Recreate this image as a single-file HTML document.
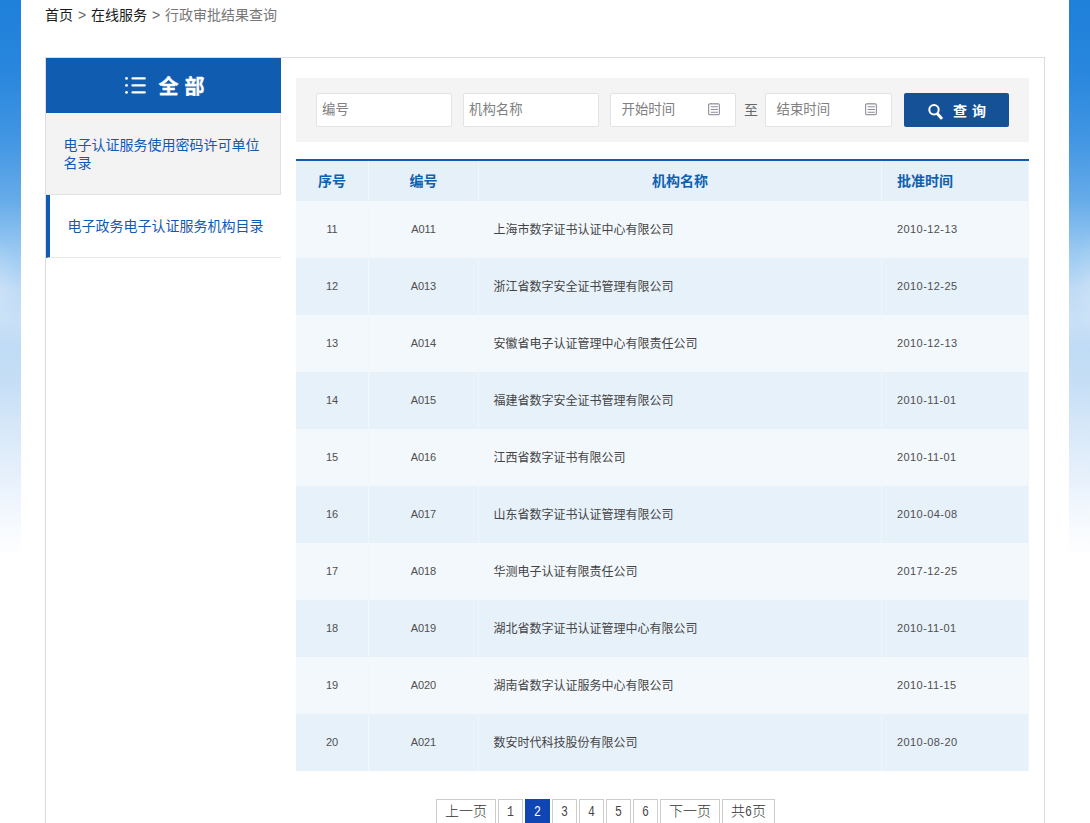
<!DOCTYPE html>
<html lang="zh-CN">
<head>
<meta charset="utf-8">
<title>行政审批结果查询</title>
<style>
*{margin:0;padding:0;box-sizing:border-box;}
html,body{width:1090px;height:823px;overflow:hidden;background:#fff;}
body{position:relative;font-family:"Liberation Sans","Noto Sans CJK SC",sans-serif;font-size:14px;color:#333;}
.sky{position:absolute;top:0;width:21px;height:823px;background:linear-gradient(to bottom,#1f80da 0px,#2886dd 70px,#4296e3 140px,#66abe9 200px,#98c8f1 250px,#c0dbf5 290px,#c8e0f7 320px,#c0dbf5 350px,#c6dff6 385px,#d4e6f8 420px,#e9f2fc 484px,#f5f9fe 520px,#fcfdff 545px,#ffffff 558px);}
.sky.l{left:0;}
.sky.l:after{content:"";position:absolute;left:0;top:230px;width:21px;height:110px;background:radial-gradient(ellipse 18px 50px at 0 55px,rgba(255,255,255,.16),rgba(255,255,255,0));}
.sky.r:after{content:"";position:absolute;left:0;top:215px;width:21px;height:120px;background:radial-gradient(ellipse 16px 55px at 21px 70px,rgba(255,255,255,.15),rgba(255,255,255,0));}
.sky.r{left:1069px;}
.crumb{position:absolute;left:45px;top:4px;height:22px;line-height:22px;font-size:14px;color:#777;white-space:nowrap;}
.crumb b{font-weight:normal;color:#1a1a1a;}
.crumb i{font-style:normal;color:#666;display:inline-block;width:18px;text-align:center;}
.box{position:absolute;left:45px;top:57px;width:1000px;height:800px;border:1px solid #dcdcdc;background:#fff;}
.side{position:absolute;left:0;top:0;width:235px;}
.side h3{height:55px;background:#105cb0;color:#fff;font-size:20px;font-weight:bold;line-height:55px;position:relative;}
.side h3 span{position:absolute;left:112.5px;top:2px;letter-spacing:6px;white-space:nowrap;-webkit-text-stroke:0.35px #fff;}
.side h3 svg{position:absolute;left:78px;top:17px;}
.side .it1{height:82px;background:#f3f3f3;border-right:1px solid #e2e2e2;border-bottom:1px solid #e2e2e2;color:#0f5ab3;font-size:14px;line-height:18px;padding:22.5px 17px 0 17.4px;}
.side .it2{height:63px;border-left:4px solid #105cb0;border-bottom:1px solid #e6e6e6;color:#0f5ab3;font-size:14px;line-height:62px;padding-left:17.4px;white-space:nowrap;}
.search{position:absolute;left:250px;top:20px;width:733px;height:64px;background:#f4f4f4;}
.inp{position:absolute;top:15px;height:34px;width:136px;background:#fff;border:1px solid #e3e3e3;border-radius:2px;font-size:13.4px;color:#808080;line-height:32px;padding-left:5px;}
.cal{position:absolute;top:9px;left:97px;}
.btn{position:absolute;left:608px;top:15px;width:105px;height:34px;background:#155196;border-radius:2px;color:#fff;font-size:14px;font-weight:bold;line-height:34px;}
table{position:absolute;left:250px;top:101px;width:733px;border-collapse:separate;border-spacing:0;border-top:2px solid #105cb0;table-layout:fixed;}
th{height:40px;padding-bottom:2px;background:#e6f0f9;color:#0e61af;font-size:14px;font-weight:bold;text-align:center;border-right:1px solid #f1f6fb;}
td{height:57px;padding-bottom:2px;font-size:12px;color:#555;text-align:center;border-right:1px solid #f1f6fb;}
tr.a td{background:#f3f8fc;}
tr.b td{background:#e7f1fa;}
td.n{text-align:left;padding-left:14.5px;color:#444;}
td.d{text-align:left;padding-left:15px;}
th.d{text-align:left;padding-left:15px;}
.num span{display:inline-block;font-family:"Liberation Sans","Noto Sans CJK SC",sans-serif;font-size:11px;color:#4f4f4f;letter-spacing:-0.1px;position:relative;top:0.5px;}
.num.d span{letter-spacing:0.42px;}
.pg span{position:absolute;top:741px;height:26px;line-height:23px;border:1px solid #ccc;font-size:14px;font-weight:300;color:#333;text-align:center;white-space:nowrap;}
.pg span.c{background:#1046b4;border-color:#1046b4;color:#fff;}
.pg span.c em{color:#fff;}
.pg em{display:inline-block;font-style:normal;font-weight:400;font-family:"Liberation Mono",monospace;font-size:11.5px;transform:translateY(-1px) scaleY(1.32);color:#444;}
</style>
</head>
<body>
<div class="sky l"></div>
<div class="sky r"></div>
<div class="crumb"><b>首页</b><i>&gt;</i><b>在线服务</b><i>&gt;</i>行政审批结果查询</div>
<div class="box">
  <div class="side">
    <h3><svg width="24" height="21" viewBox="0 0 24 21"><g fill="#fff"><circle cx="2.5" cy="3.4" r="1.4"/><circle cx="2.5" cy="10.4" r="1.4"/><circle cx="2.5" cy="17.4" r="1.4"/></g><g stroke="#fff" stroke-width="2.2" stroke-linecap="round"><line x1="8.5" y1="3.4" x2="20.8" y2="3.4"/><line x1="8.5" y1="10.4" x2="20.8" y2="10.4"/><line x1="8.5" y1="17.4" x2="20.8" y2="17.4"/></g></svg><span>全部</span></h3>
    <div class="it1">电子认证服务使用密码许可单位名录</div>
    <div class="it2">电子政务电子认证服务机构目录</div>
  </div>
  <div class="search">
    <div class="inp" style="left:20px">编号</div>
    <div class="inp" style="left:167px">机构名称</div>
    <div class="inp" style="left:314px;width:126px;padding-left:10.5px">开始时间<svg class="cal" width="13" height="13" viewBox="0 0 13 13"><g fill="none" stroke="#9696a6"><rect x="0.6" y="0.9" width="10.8" height="10.7" rx="1.1" stroke-width="1.2"/><path d="M2.7 3.7H9.9M2.7 6.5H9.9M2.7 9.3H9.9" stroke="#8a8a9a" stroke-width="1.1"/><path d="M3.2 0V1M6 0V1M8.8 0V1" stroke-width="1.3"/></g></svg></div>
    <div style="position:absolute;left:448px;top:15px;line-height:34px;font-size:14px;color:#666">至</div>
    <div class="inp" style="left:469px;width:127px;padding-left:10.5px">结束时间<svg class="cal" style="left:99px" width="13" height="13" viewBox="0 0 13 13"><g fill="none" stroke="#9696a6"><rect x="0.6" y="0.9" width="10.8" height="10.7" rx="1.1" stroke-width="1.2"/><path d="M2.7 3.7H9.9M2.7 6.5H9.9M2.7 9.3H9.9" stroke="#8a8a9a" stroke-width="1.1"/><path d="M3.2 0V1M6 0V1M8.8 0V1" stroke-width="1.3"/></g></svg></div>
    <div class="btn"><svg width="18" height="18" viewBox="0 0 18 18" style="position:absolute;left:22px;top:9px"><circle cx="8" cy="7.7" r="4.7" fill="none" stroke="#fff" stroke-width="2"/><line x1="11.6" y1="12.0" x2="15.2" y2="16.0" stroke="#fff" stroke-width="3" stroke-linecap="round"/></svg><span style="position:absolute;left:49px;top:1px;letter-spacing:5px;white-space:nowrap">查询</span></div>
  </div>
  <table>
    <colgroup><col style="width:73px"><col style="width:110px"><col style="width:403px"><col style="width:147px"></colgroup>
    <tr><th>序号</th><th>编号</th><th>机构名称</th><th class="d">批准时间</th></tr>
    <tr class="a"><td class="num"><span>11</span></td><td class="num"><span>A011</span></td><td class="n">上海市数字证书认证中心有限公司</td><td class="d num"><span>2010-12-13</span></td></tr>
    <tr class="b"><td class="num"><span>12</span></td><td class="num"><span>A013</span></td><td class="n">浙江省数字安全证书管理有限公司</td><td class="d num"><span>2010-12-25</span></td></tr>
    <tr class="a"><td class="num"><span>13</span></td><td class="num"><span>A014</span></td><td class="n">安徽省电子认证管理中心有限责任公司</td><td class="d num"><span>2010-12-13</span></td></tr>
    <tr class="b"><td class="num"><span>14</span></td><td class="num"><span>A015</span></td><td class="n">福建省数字安全证书管理有限公司</td><td class="d num"><span>2010-11-01</span></td></tr>
    <tr class="a"><td class="num"><span>15</span></td><td class="num"><span>A016</span></td><td class="n">江西省数字证书有限公司</td><td class="d num"><span>2010-11-01</span></td></tr>
    <tr class="b"><td class="num"><span>16</span></td><td class="num"><span>A017</span></td><td class="n">山东省数字证书认证管理有限公司</td><td class="d num"><span>2010-04-08</span></td></tr>
    <tr class="a"><td class="num"><span>17</span></td><td class="num"><span>A018</span></td><td class="n">华测电子认证有限责任公司</td><td class="d num"><span>2017-12-25</span></td></tr>
    <tr class="b"><td class="num"><span>18</span></td><td class="num"><span>A019</span></td><td class="n">湖北省数字证书认证管理中心有限公司</td><td class="d num"><span>2010-11-01</span></td></tr>
    <tr class="a"><td class="num"><span>19</span></td><td class="num"><span>A020</span></td><td class="n">湖南省数字认证服务中心有限公司</td><td class="d num"><span>2010-11-15</span></td></tr>
    <tr class="b"><td class="num"><span>20</span></td><td class="num"><span>A021</span></td><td class="n">数安时代科技股份有限公司</td><td class="d num"><span>2010-08-20</span></td></tr>
  </table>
  <div class="pg"><span style="left:390px;width:60px">上一页</span><span style="left:452px;width:25px"><em>1</em></span><span class="c" style="left:479px;width:25px"><em>2</em></span><span style="left:506px;width:25px"><em>3</em></span><span style="left:533px;width:25px"><em>4</em></span><span style="left:560px;width:25px"><em>5</em></span><span style="left:587px;width:25px"><em>6</em></span><span style="left:614px;width:60px">下一页</span><span style="left:676px;width:53px">共<em>6</em>页</span></div>
</div>
</body>
</html>
